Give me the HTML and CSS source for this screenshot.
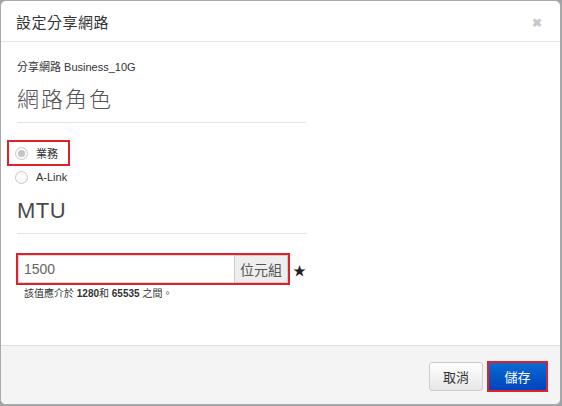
FILE: index.html
```html
<!DOCTYPE html>
<html lang="zh-Hant">
<head>
<meta charset="utf-8">
<link rel="stylesheet" href="styles.css">
</head>
<body>
<div class="modal">
  <div class="modal-header">
    <h3 class="title">設定分享網路</h3>
    <span class="close">&#x2716;</span>
  </div>
  <div class="modal-body">
    <div class="subtitle">分享網路 Business_10G</div>
    <h4 class="section">網路角色</h4>
    <div class="radios">
      <label class="radio hl"><span class="dot checked"></span>業務</label>
      <label class="radio"><span class="dot"></span>A-Link</label>
    </div>
    <h4 class="section mtu">MTU</h4>
    <div class="field">
      <div class="input-group">
        <span class="input">1500</span>
        <span class="addon">位元組</span>
      </div>
      <span class="star">&#9733;</span>
    </div>
    <div class="help">該值應介於 <b>1280</b>和 <b>65535</b> 之間。</div>
  </div>
  <div class="modal-footer">
    <button class="btn">取消</button>
    <button class="btn primary">儲存</button>
  </div>
</div>
</body>
</html>
```
FILE: styles.css
```css
html, body { margin: 0; padding: 0; }
body {
  width: 562px; height: 406px;
  background: #9ea3a8;
  font-family: "Liberation Sans", Arial, "Noto Sans CJK TC", sans-serif;
  color: #333;
  overflow: hidden;
}
.modal {
  box-sizing: border-box;
  width: 561px; height: 405px;
  background: #fff;
  border: 1px solid #a9a9a9;
  border-radius: 6px;
  display: flex; flex-direction: column;
  overflow: hidden;
}
.modal-header {
  height: 40px;
  border-bottom: 1px solid #e5e5e5;
  display: flex; align-items: center; justify-content: space-between;
  padding: 0 18px 0 15px;
}
.title { margin: 0; font-size: 15px; font-weight: normal; color: #333; letter-spacing: 0.5px; }
.close { color: #c8c8c8; font-size: 12px; font-weight: bold; margin-top: 3px; }
.modal-body { flex: 1; padding: 18px 0 0 16px; }
.subtitle { font-size: 11px; color: #333; line-height: 14px; }
.section {
  margin: 12px 0 0; width: 289px;
  font-size: 22px; font-weight: 300; color: #555;
  line-height: 28px; padding-bottom: 8px;
  border-bottom: 1px solid #e3e3e3;
  letter-spacing: 2px;
}
.radios { margin: 17px 0 0 -10px; display: flex; flex-direction: column; gap: 0; }
.radio {
  display: flex; align-items: center; gap: 8px;
  font-size: 11px; color: #333; height: 22px;
  width: fit-content; padding-right: 10px; box-sizing: border-box;
}
.radio.hl { border: 2px solid #e0202a; width: 63px; height: 26px; padding-left: 6px; }
.radio:not(.hl) { padding-left: 8px; }
.dot {
  width: 13px; height: 13px; border-radius: 50%;
  border: 1px solid #c8c8c8; background: #fafafa; box-sizing: border-box;
  position: relative;
}
.dot.checked::after {
  content: ""; position: absolute; left: 2px; top: 2px;
  width: 7px; height: 7px; border-radius: 50%; background: #c4c4c4;
}
.section.mtu { margin-top: 9px; padding-bottom: 8px; letter-spacing: 0.5px; color: #4a4a4a; }
.field { display: flex; align-items: center; margin: 19px 0 0 -1px; }
.input-group {
  display: flex; width: 274px; height: 32px; box-sizing: border-box;
  border: 2px solid #e0202a;
}
.input {
  flex: 1; display: flex; align-items: center; padding-left: 5px;
  font-size: 14px; color: #666; border: 1px solid #ddd; border-right: none;
}
.addon {
  width: 52px; display: flex; align-items: center; justify-content: center;
  background: #eee; border: 1px solid #ccc; font-size: 14px; color: #555;
}
.star { font-size: 13px; margin-left: 3px; color: #222; }
.help { font-size: 10px; color: #333; margin: 0 0 0 7px; }
.help b { font-weight: bold; }
.modal-footer {
  height: 58px; background: #f4f4f4; border-top: 1px solid #ddd;
  display: flex; align-items: center; justify-content: flex-end;
  padding-right: 12px; gap: 4px;
}
.btn {
  font-family: inherit; font-size: 13px;
  height: 29px; width: 54px; border-radius: 3px;
  border: 1px solid #ccc; color: #333;
  background: linear-gradient(#fff, #e6e6e6);
  padding: 0; margin-top: 2px;
}
.btn.primary {
  width: 61px; height: 31px; border: 2px solid #e0202a; border-radius: 0;
  color: #fff; background: linear-gradient(#0a6ad4, #0044bb);
}
```
